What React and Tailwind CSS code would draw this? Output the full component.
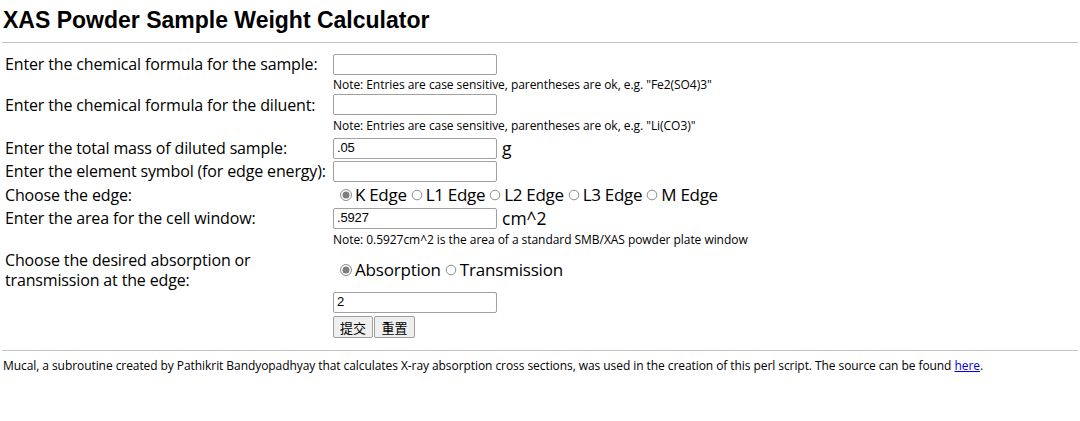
import React from 'react';

const body = "font-['Open_Sans','Noto_Sans',sans-serif]";

const Radio = ({ checked }) => (
  <svg width="12" height="12" viewBox="0 0 12 12" className={`${checked ? 'ml-[7px]' : 'ml-[4px]'} mr-[3px] shrink-0`}>
    <circle cx="6" cy="6" r={checked ? 5.5 : 4.8} fill="white" stroke="#8d8d8d" strokeWidth="1" />
    {checked && <circle cx="6" cy="6" r="3.5" fill="#7d7d7d" />}
  </svg>
);

const Input = ({ value }) => (
  <div className="w-[164px] h-[21px] border border-[#a0a0a0] rounded-[2px] bg-white px-[3px] flex items-center font-['Liberation_Sans',Arial,sans-serif] text-[13px] text-black shrink-0">
    {value}
  </div>
);

const Row = ({ label, h, children }) => (
  <div className={`flex items-center ${h}`}>
    <div className="w-[328px] shrink-0 leading-[20px]">{label}</div>
    <div className="flex items-center">{children}</div>
  </div>
);

const Note = ({ h, children }) => (
  <div className={`flex items-center ${h}`}>
    <div className="w-[328px] shrink-0" />
    <div className={`${body} text-[12px] tracking-[-0.05px] leading-[14px] text-black`}>{children}</div>
  </div>
);

export default function App() {
  return (
    <div className="w-[1080px] h-[421px] bg-white text-black overflow-hidden">
      <h1 className="font-['Liberation_Sans',Arial,sans-serif] font-bold text-[23px] leading-[28px] pl-[3px] pt-[6px] h-[42px]">
        XAS Powder Sample Weight Calculator
      </h1>
      <div className="h-px bg-[#c4c4c4] mx-[2px]" />

      <div className={`${body} text-[16px] tracking-[-0.15px] pl-[5px] pt-[10px]`}>
        <Row label="Enter the chemical formula for the sample:" h="h-[22px]">
          <Input value="" />
        </Row>
        <Note h="h-[19px]">Note: Entries are case sensitive, parentheses are ok, e.g. "Fe2(SO4)3"</Note>

        <Row label="Enter the chemical formula for the diluent:" h="h-[21px]">
          <Input value="" />
        </Row>
        <Note h="h-[22px]">Note: Entries are case sensitive, parentheses are ok, e.g. "Li(CO3)"</Note>

        <Row label="Enter the total mass of diluted sample:" h="h-[22px]">
          <Input value=".05" />
          <span className="text-[17.5px] ml-[5px] tracking-normal">g</span>
        </Row>
        <div className="h-px" />

        <Row label="Enter the element symbol (for edge energy):" h="h-[22px]">
          <Input value="" />
        </Row>

        <Row label="Choose the edge:" h="h-[25px]">
          <div className="flex items-center text-[17px] leading-[22px] tracking-[-0.3px]">
            <Radio checked />
            <span>K Edge</span>
            <Radio />
            <span>L1 Edge</span>
            <Radio />
            <span>L2 Edge</span>
            <Radio />
            <span>L3 Edge</span>
            <Radio />
            <span>M Edge</span>
          </div>
        </Row>

        <Row label="Enter the area for the cell window:" h="h-[22px]">
          <Input value=".5927" />
          <span className="text-[17.5px] ml-[5px] tracking-normal">cm^2</span>
        </Row>
        <Note h="h-[22px]">Note: 0.5927cm^2 is the area of a standard SMB/XAS powder plate window</Note>

        <Row
          label={
            <>
              Choose the desired absorption or
              <br />
              transmission at the edge:
            </>
          }
          h="h-[37px]"
        >
          <div className="flex items-center text-[17px] leading-[22px] tracking-[-0.2px]">
            <Radio checked />
            <span>Absorption</span>
            <Radio />
            <span>Transmission</span>
          </div>
        </Row>

        <Row label="" h="h-[24px] mt-[2px]">
          <Input value="2" />
        </Row>

        <Row label="" h="h-[26px]">
          <button className="h-[22px] w-[40px] border border-[#a0a0a0] rounded-[2px] bg-[#efefef] text-[13px] leading-none font-['Noto_Sans_CJK_SC',sans-serif] tracking-normal">提交</button>
          <button className="h-[22px] w-[41px] ml-px border border-[#a0a0a0] rounded-[2px] bg-[#efefef] text-[13px] leading-none font-['Noto_Sans_CJK_SC',sans-serif] tracking-normal">重置</button>
        </Row>
      </div>

      <div className="h-px bg-[#c4c4c4] mx-[2px] mt-[10px]" />
      <p className={`${body} text-[12px] tracking-[-0.07px] leading-[16px] pl-[3px] mt-[7px]`}>
        Mucal, a subroutine created by Pathikrit Bandyopadhyay that calculates X-ray absorption cross sections, was used in the creation of this perl script. The source can be found{' '}
        <a href="#" className="text-[#0000ee] underline">here</a>.
      </p>
    </div>
  );
}
